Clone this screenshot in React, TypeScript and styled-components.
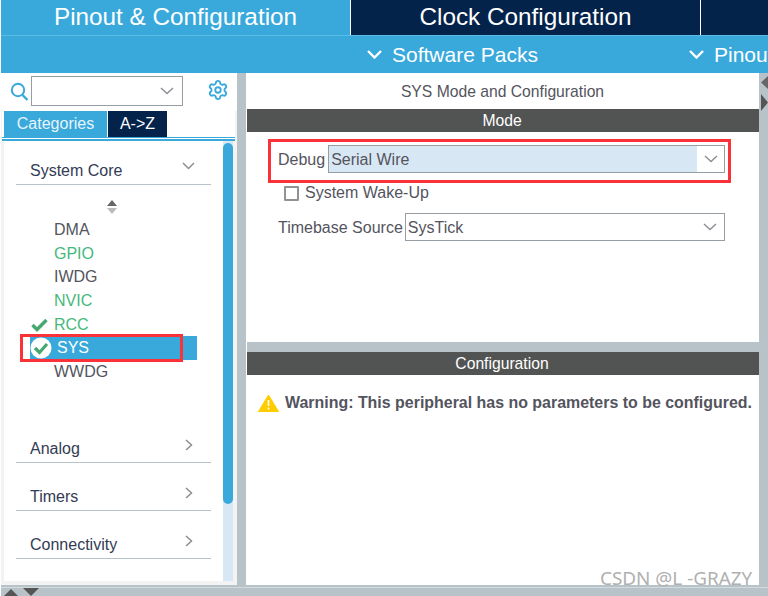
import React from "react";
import styled, { createGlobalStyle } from "styled-components";
import { Settings } from "lucide-react";

const Global = createGlobalStyle`
  html, body { margin: 0; padding: 0; background: #fff; }
  * { box-sizing: border-box; }
`;

const NAVY = "#03234b";
const BLUE = "#39a9dc";
const GREY = "#b8c3c9";
const DARK = "#525453";
const TEXT = "#54545e";

const Page = styled.div`
  position: relative;
  width: 768px;
  height: 596px;
  overflow: hidden;
  display: flex;
  flex-direction: column;
  background: #fff;
  font-family: "Liberation Sans", Arial, sans-serif;
  color: ${TEXT};
`;

const TabBar = styled.div`
  display: flex;
  height: 36px;
  margin-left: 1px;
  flex: none;
  background: ${NAVY};
  border-bottom: 1px solid #5cbbe6;
`;

const TopTab = styled.div<{ $active?: boolean; $w: number }>`
  width: ${(p) => p.$w}px;
  flex: none;
  display: flex;
  align-items: center;
  justify-content: center;
  font-size: 24.3px;
  color: #fff;
  background: ${(p) => (p.$active ? BLUE : NAVY)};
  border-right: 1px solid #fff;
  padding-bottom: 1px;
`;

const SubBar = styled.div`
  height: 37px;
  flex: none;
  margin-left: 1px;
  background: ${BLUE};
  display: flex;
  color: #fff;
  font-size: 21px;
  padding-left: 366px;
`;

const SubItem = styled.div<{ $w?: number }>`
  display: flex;
  align-items: center;
  gap: 10px;
  white-space: nowrap;
  ${(p) => (p.$w ? `width: ${p.$w}px; flex: none;` : "")}
`;

const Body = styled.div`
  flex: 1;
  display: flex;
  min-height: 0;
`;

const LeftPanel = styled.div`
  width: 236px;
  flex: none;
  background: #f3f3f3;
  margin-left: 1px;
  display: flex;
  flex-direction: column;
  padding-bottom: 4px;
`;

const SearchRow = styled.div`
  height: 38px;
  flex: none;
  background: #fff;
  display: flex;
  padding: 3px 0 0 9px;
`;

const SearchBox = styled.div`
  width: 152px;
  height: 30px;
  margin-left: 2px;
  border: 1px solid #979ea3;
  background: #fff;
  display: flex;
  align-items: center;
  justify-content: flex-end;
  padding-right: 8px;
`;

const SearchIcon = styled.svg`
  width: 19px;
  height: 20px;
  margin-top: 6px;
  flex: none;
`;

const Gear = styled(Settings)`
  margin: 3px 0 0 24px;
  flex: none;
`;

const CatTabs = styled.div`
  height: 27px;
  flex: none;
  background: #fff;
  display: flex;
  padding-left: 2px;
  margin: 0 2px 0 1px;
  border-bottom: 1px solid ${BLUE};
`;

const CatTab = styled.div<{ $active?: boolean; $w: number }>`
  width: ${(p) => p.$w}px;
  flex: none;
  margin-right: 1px;
  height: 26px;
  background: ${(p) => (p.$active ? BLUE : NAVY)};
  color: ${(p) => (p.$active ? "#e6f4fb" : "#fff")};
  font-size: 16px;
  display: flex;
  align-items: center;
  justify-content: center;
`;

const CatGap = styled.div`
  height: 3px;
  flex: none;
  background: #fff;
  margin: 0 2px 0 1px;
  border-bottom: 2px solid ${BLUE};
`;

const TreeWrap = styled.div`
  flex: 1;
  min-height: 0;
  display: flex;
  padding: 0 4px 0 3px;
`;

const Tree = styled.div`
  flex: 1;
  background: #fff;
  padding: 0 12px;
  display: flex;
  flex-direction: column;
`;

const Track = styled.div`
  width: 10px;
  flex: none;
  background: #d8e7f4;
  display: flex;
`;

const Thumb = styled.div`
  width: 10px;
  height: 361px;
  margin-top: 2px;
  background: ${BLUE};
  border-radius: 5px;
`;

const Group = styled.div<{ $h: number }>`
  height: ${(p) => p.$h}px;
  flex: none;
  width: 195px;
  border-bottom: 1px solid ${GREY};
  color: #333b55;
  font-size: 16px;
  padding-left: 14px;
  display: flex;
  align-items: flex-end;
  justify-content: space-between;
  line-height: 18px;
  padding-bottom: 4px;
`;

const Chevron = styled.svg<{ $right?: boolean }>`
  flex: none;
  margin: ${(p) => (p.$right ? "0 18px 7px 0" : "0 16px 10px 0")};
  fill: none;
  stroke: #8b8f93;
  stroke-width: 1.5;
`;

const SortIcon = styled.svg`
  display: block;
  flex: none;
  width: 12px;
  height: 16px;
  margin: 14px 0 0 90px;
`;

const List = styled.div`
  width: 195px;
  margin-top: 3px;
  height: 197px;
  flex: none;
`;

const Item = styled.div<{ $green?: boolean; $selected?: boolean }>`
  height: 23.7px;
  display: flex;
  align-items: center;
  font-size: 16px;
  color: ${(p) => (p.$selected ? "#fff" : p.$green ? "#45b97c" : TEXT)};
  background: ${(p) => (p.$selected ? BLUE : "transparent")};
  margin-left: ${(p) => (p.$selected ? 14 : 0)}px;
  width: ${(p) => (p.$selected ? 167 : 195)}px;
  padding-left: ${(p) => (p.$selected ? 0 : 38)}px;
  position: relative;
`;

const CheckMark = styled.svg`
  position: absolute;
  left: 15px;
  top: 5px;
  width: 17px;
  height: 14px;
`;

const SelIcon = styled.svg`
  width: 22px;
  height: 22px;
  margin-right: 5px;
  flex: none;
`;

const Splitter = styled.div`
  width: 9px;
  flex: none;
  background: ${GREY};
`;

const RightPanel = styled.div`
  width: 513px;
  flex: none;
  background: #fff;
  display: flex;
  flex-direction: column;
`;

const PanelTitle = styled.div`
  height: 36px;
  flex: none;
  display: flex;
  align-items: center;
  justify-content: center;
  font-size: 15.7px;
  padding-top: 1px;
`;

const SectionBar = styled.div`
  height: 23px;
  flex: none;
  margin-left: 1px;
  padding-right: 2px;
  background: ${DARK};
  color: #fff;
  font-size: 15.7px;
  display: flex;
  align-items: center;
  justify-content: center;
`;

const ModeBody = styled.div`
  height: 210px;
  flex: none;
  padding: 13px 0 0 32px;
`;

const FormRow = styled.div<{ $h?: number }>`
  display: flex;
  align-items: center;
  height: ${(p) => p.$h ?? 28}px;
  font-size: 16px;
  line-height: 18px;
`;

const Label = styled.span`
  padding-top: 2px;
  white-space: nowrap;
`;

const WakeLabel = styled.span`
  white-space: nowrap;
`;

const Select = styled.div<{ $w: number; $ml: number }>`
  width: ${(p) => p.$w}px;
  height: 28px;
  margin-left: ${(p) => p.$ml}px;
  flex: none;
  border: 1px solid #979ea3;
  display: flex;
  align-items: stretch;
`;

const SelectValue = styled.div<{ $hl?: boolean }>`
  flex: 1;
  display: flex;
  align-items: center;
  padding: 2px 0 0 2px;
  background: ${(p) => (p.$hl ? "#d8e7f4" : "#fff")};
`;

const SelectArrow = styled.div`
  width: 27px;
  flex: none;
  display: flex;
  align-items: center;
  justify-content: center;
`;

const SmallChevron = styled.svg`
  fill: none;
  stroke: #8b8f93;
  stroke-width: 1.4;
`;

const Check = styled.div`
  width: 15px;
  height: 15px;
  border: 2px solid #8f9396;
  border-radius: 1px;
  margin: 0 6px;
  flex: none;
`;

const Band = styled.div`
  height: 10px;
  flex: none;
  margin-left: 1px;
  background: ${GREY};
`;

const WarningRow = styled.div`
  display: flex;
  align-items: center;
  margin-top: 17px;
  padding-left: 12px;
  font-size: 15.95px;
  font-weight: 700;
  gap: 6px;
  height: 22px;
  white-space: nowrap;
`;

const RedBox = styled.div<{ $x: number; $y: number; $w: number; $h: number }>`
  position: absolute;
  left: ${(p) => p.$x}px;
  top: ${(p) => p.$y}px;
  width: ${(p) => p.$w}px;
  height: ${(p) => p.$h}px;
  border: 3px solid #fb3339;
  pointer-events: none;
`;

const Watermark = styled.div`
  position: absolute;
  left: 600px;
  top: 567px;
  font-family: "Noto Sans", sans-serif;
  font-size: 18.9px;
  line-height: 22px;
  color: #b0b0b0;
  white-space: nowrap;
`;

const BottomBar = styled.div`
  height: 11px;
  flex: none;
  margin-left: 1px;
  background: ${GREY};
  border-top: 1px solid ${GREY};
  display: flex;
  flex-direction: column;
`;

const BottomHair = styled.div`
  height: 1px;
  margin-top: 1px;
  background: #d4dbdf;
  flex: none;
`;

const BottomArrows = styled.svg`
  width: 40px;
  height: 8px;
  margin-left: 2px;
  flex: none;
`;

const SideArrows = styled.svg`
  width: 9px;
  height: 40px;
  display: block;
`;

const Down = () => (
  <svg width="15" height="9" viewBox="0 0 15 9" fill="none" stroke="#fff" strokeWidth="2.4">
    <path d="M1 1l6.5 6.5L14 1" />
  </svg>
);

const ChevDown = () => (
  <Chevron width="13" height="8" viewBox="0 0 13 8">
    <path d="M1 1l5.5 5.5L12 1" />
  </Chevron>
);
const ChevRight = () => (
  <Chevron $right width="8" height="12" viewBox="0 0 8 12">
    <path d="M1 1l5.5 5L1 11" />
  </Chevron>
);
const SmallDown = () => (
  <SmallChevron width="14" height="8" viewBox="0 0 14 8">
    <path d="M1 1l6 5.5L13 1" />
  </SmallChevron>
);

export default function App() {
  return (
    <Page>
      <Global />
      <TabBar>
        <TopTab $active $w={350}>Pinout &amp; Configuration</TopTab>
        <TopTab $w={350}>Clock Configuration</TopTab>
      </TabBar>
      <SubBar>
        <SubItem $w={322}><Down />Software Packs</SubItem>
        <SubItem><Down />Pinout</SubItem>
      </SubBar>
      <Body>
        <LeftPanel>
          <SearchRow>
            <SearchIcon viewBox="0 0 19 20" fill="none" stroke={BLUE}>
              <circle cx="8" cy="8" r="6.2" strokeWidth="2" />
              <path d="M12.5 13l5 5" strokeWidth="2.4" />
            </SearchIcon>
            <SearchBox><SmallDown /></SearchBox>
            <Gear size={22} color={BLUE} strokeWidth={2} />
          </SearchRow>
          <CatTabs>
            <CatTab $active $w={103}>Categories</CatTab>
            <CatTab $w={59}>A-&gt;Z</CatTab>
          </CatTabs>
          <CatGap />
          <TreeWrap>
            <Tree>
              <Group $h={44}>System Core<ChevDown /></Group>
              <SortIcon viewBox="0 0 12 16">
                <path d="M6 1l5 6H1z" fill="#666" />
                <path d="M6 15l5-6H1z" fill="#bbb" />
              </SortIcon>
              <List>
                <Item>DMA</Item>
                <Item $green>GPIO</Item>
                <Item>IWDG</Item>
                <Item $green>NVIC</Item>
                <Item $green>
                  <CheckMark viewBox="0 0 17 14" fill="none" stroke="#45a96f" strokeWidth="3.4">
                    <path d="M1.5 7l4.5 4.5L15.5 2" />
                  </CheckMark>
                  RCC
                </Item>
                <Item $selected>
                  <SelIcon viewBox="0 0 22 22">
                    <circle cx="11" cy="11" r="10.5" fill="#fff" />
                    <path d="M5 11l4.5 4.5L17 7" fill="none" stroke="#45a96f" strokeWidth="3.2" />
                  </SelIcon>
                  SYS
                </Item>
                <Item>WWDG</Item>
              </List>
              <Group $h={48}>Analog<ChevRight /></Group>
              <Group $h={48}>Timers<ChevRight /></Group>
              <Group $h={48}>Connectivity<ChevRight /></Group>
            </Tree>
            <Track><Thumb /></Track>
          </TreeWrap>
        </LeftPanel>
        <Splitter />
        <RightPanel>
          <PanelTitle>SYS Mode and Configuration</PanelTitle>
          <SectionBar>Mode</SectionBar>
          <ModeBody>
            <FormRow>
              <Label>Debug</Label>
              <Select $w={397} $ml={3}>
                <SelectValue $hl>Serial Wire</SelectValue>
                <SelectArrow><SmallDown /></SelectArrow>
              </Select>
            </FormRow>
            <FormRow $h={40}>
              <Check /><WakeLabel>System Wake-Up</WakeLabel>
            </FormRow>
            <FormRow>
              <Label>Timebase Source</Label>
              <Select $w={320} $ml={2}>
                <SelectValue>SysTick</SelectValue>
                <SelectArrow><SmallDown /></SelectArrow>
              </Select>
            </FormRow>
          </ModeBody>
          <Band />
          <SectionBar>Configuration</SectionBar>
          <WarningRow>
            <svg width="21" height="18" viewBox="0 0 21 18">
              <path d="M10.5 1L20.5 17.5H.5z" fill="#ffcc00" stroke="#ffcc00" strokeLinejoin="round" />
              <path d="M10.5 6v6M10.5 13.5v2" stroke="#fff" strokeWidth="1.6" />
            </svg>
            Warning: This peripheral has no parameters to be configured.
          </WarningRow>
        </RightPanel>
        <Splitter>
          <SideArrows viewBox="0 0 9 40">
            <path d="M2 9.5l7-6.5v13z" fill="#666" />
            <path d="M2 21l7 8.5L2 38z" fill="#555" />
          </SideArrows>
        </Splitter>
      </Body>
      <BottomBar>
        <BottomHair />
        <BottomArrows viewBox="0 0 40 8">
          <path d="M8 1l7 7H1z" fill="#555" />
          <path d="M20 0h16l-8 8z" fill="#555" />
        </BottomArrows>
      </BottomBar>
      <RedBox $x={20} $y={334} $w={163} $h={28} />
      <RedBox $x={268} $y={139} $w={463} $h={44} />
      <Watermark>CSDN @L -GRAZY</Watermark>
    </Page>
  );
}
